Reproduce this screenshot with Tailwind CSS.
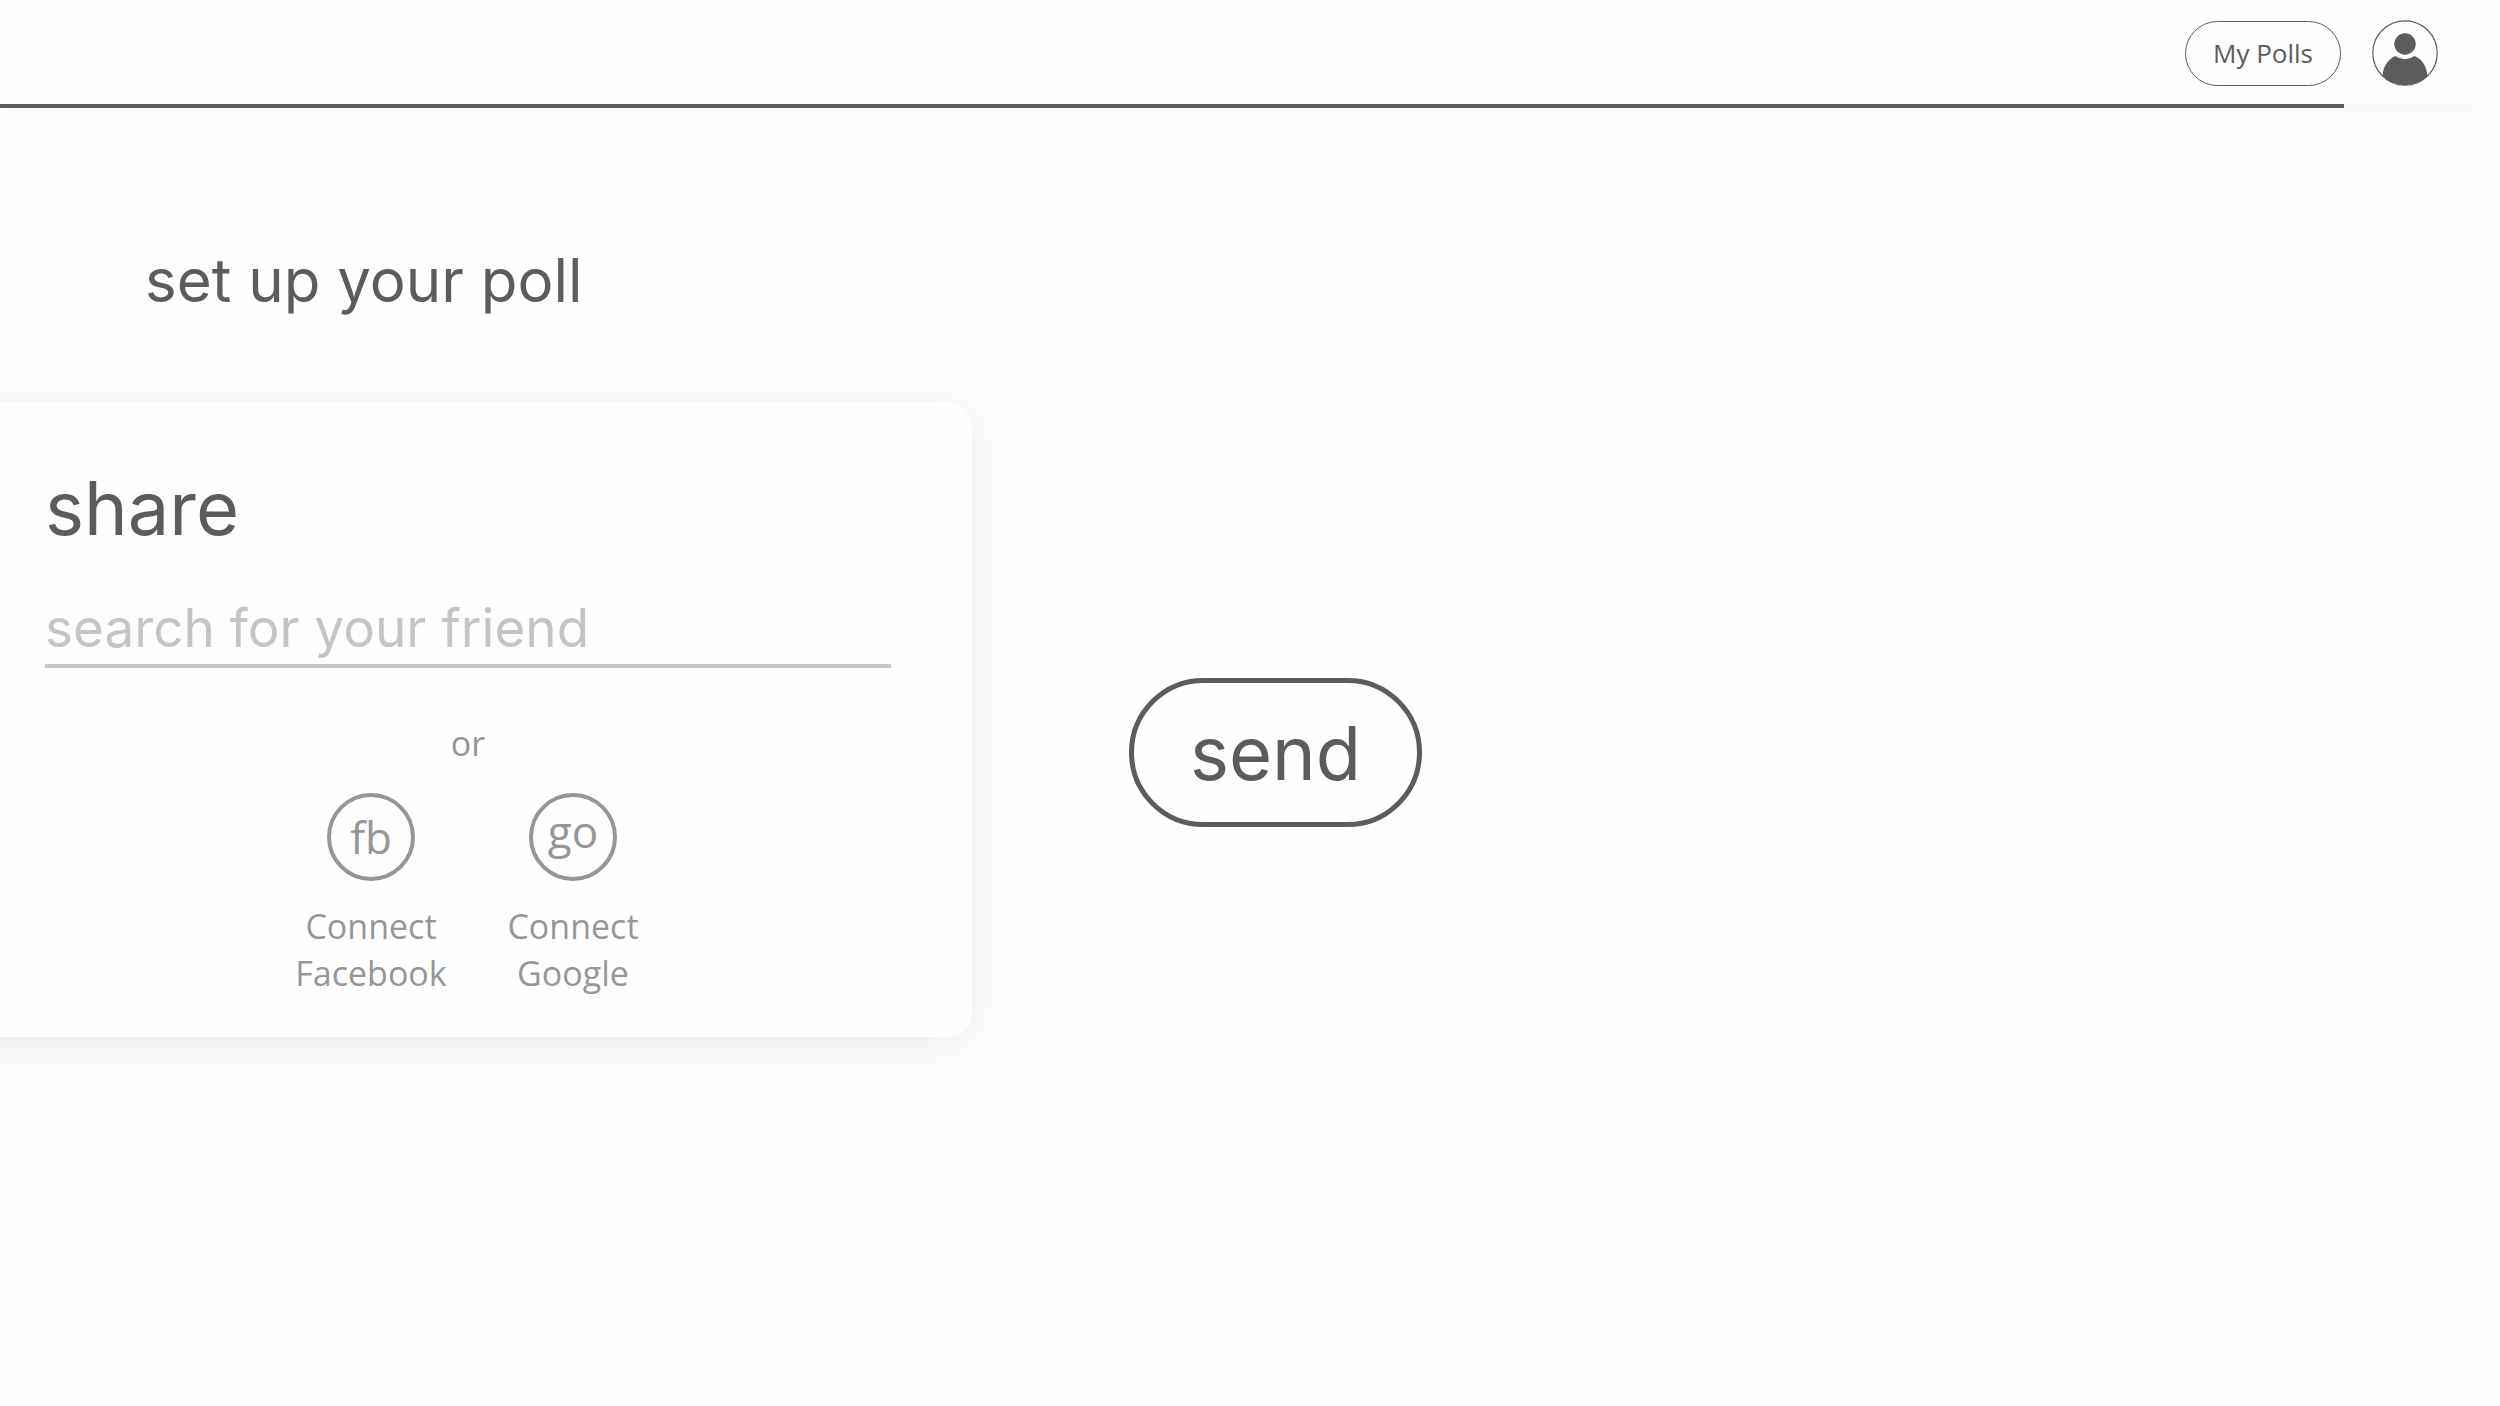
<!DOCTYPE html>
<html lang="en">
<head>
<meta charset="utf-8">
<title>Set up your poll</title>
<script src="https://cdn.jsdelivr.net/npm/@tailwindcss/browser@4"></script>
</head>
<body class="min-h-screen overflow-x-hidden bg-[#fefefe] font-['Open_Sans',sans-serif] text-[#5c5c5c]">
<header class="flex h-[104px] items-center justify-end gap-[31px] bg-[#fefefe] pr-[62px] pt-[2px] shadow-[0_2px_30px_rgb(0_0_0/0.04)]">
  <button type="button" class="h-[65px] rounded-full border border-[#5c5c5c] px-[27px] text-[26px]">My Polls</button>
  <button type="button" aria-label="Account" class="size-[66px]">
    <svg viewBox="0 0 66 66" class="size-full" aria-hidden="true">
      <defs><clipPath id="disc"><circle cx="33" cy="33" r="32"/></clipPath></defs>
      <circle cx="33" cy="24" r="10.7" fill="#5c5c5c"/>
      <path clip-path="url(#disc)" fill="#5c5c5c" d="M23.5 36 Q33 42.500 42.500 36 C50 39 54.500 46 55.500 55.500 V66 H10.500 V55.500 C11.500 46 16 39 23.500 36Z"/>
      <circle cx="33" cy="33" r="32.200" fill="none" stroke="#5c5c5c" stroke-width="1.200"/>
    </svg>
  </button>
</header>
<div class="mr-[156px] h-1 bg-[#5c5c5c]"></div>

<main class="pt-[136px] font-[Inter,sans-serif]">
  <h1 class="pl-[145px] text-[60px] leading-[72px]">set up your poll</h1>
  <div class="mt-[86px] grid grid-cols-[972fr_1528fr] items-start">
    <section class="-ml-12 rounded-3xl bg-[#fefefe] pb-10 pl-[93px] pr-[81px] pt-[62px] shadow-[0_6px_50px_rgb(0_0_0/0.08)]">
      <h2><label for="friend" class="block text-[74px] leading-[88px]">share</label></h2>
      <input id="friend" type="text" placeholder="search for your friend" class="mt-[47px] block h-[69px] w-full border-b-4 border-[#c4c4c4] pb-[5px] text-[53px] outline-none placeholder:text-[#c4c4c4]">
      <div class="font-['Open_Sans',sans-serif] text-[34px] leading-[47px] text-[#969696]">
        <p class="mt-[52px] text-center">or</p>
        <div class="mt-[26px] flex justify-center gap-[50px] pl-2">
          <button type="button" class="flex w-[152px] flex-col items-center gap-[22px]">
            <span class="flex size-[88px] items-center justify-center rounded-full border-4 border-[#969696] text-[44px]">fb</span>
            <span>Connect Facebook</span>
          </button>
          <button type="button" class="flex w-[152px] flex-col items-center gap-[22px]">
            <span class="flex size-[88px] items-center justify-center rounded-full border-4 border-[#969696] pb-3 text-[44px]">go</span>
            <span>Connect Google</span>
          </button>
        </div>
      </div>
    </section>
    <button type="button" class="ml-[157px] mt-[276px] h-[149px] w-[293px] rounded-full border-5 border-[#5c5c5c] text-[74px] leading-[88px]">send</button>
  </div>
</main>
</body>
</html>
